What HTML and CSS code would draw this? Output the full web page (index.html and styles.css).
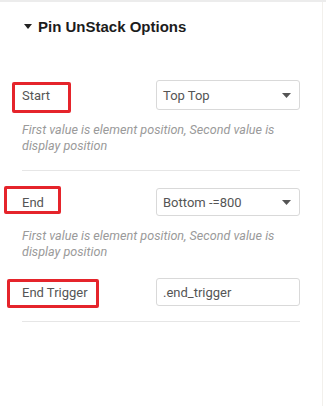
FILE: index.html
```html
<!DOCTYPE html>
<html>
<head>
<meta charset="utf-8">
<link rel="stylesheet" href="styles.css">
</head>
<body>
<div class="page">
  <div class="panel">
    <div class="header">
      <svg class="head-caret" width="8" height="5" viewBox="0 0 8 5"><path d="M0 0H8L4 5Z" fill="#222"/></svg>
      <span class="head-title">Pin UnStack Options</span>
    </div>

    <div class="row row-start">
      <span class="label">Start</span>
      <div class="select h30"><span>Top Top</span><svg width="9" height="5" viewBox="0 0 9 5"><path d="M0 0H9L4.5 5Z" fill="#555"/></svg></div>
      <div class="mark mark-start"></div>
    </div>
    <p class="desc">First value is element position, Second value is display position</p>
    <div class="sep sep1"></div>

    <div class="row row-end">
      <span class="label">End</span>
      <div class="select h28"><span>Bottom -=800</span><svg width="9" height="5" viewBox="0 0 9 5"><path d="M0 0H9L4.5 5Z" fill="#555"/></svg></div>
      <div class="mark mark-end"></div>
    </div>
    <p class="desc">First value is element position, Second value is display position</p>

    <div class="row row-trigger">
      <span class="label">End Trigger</span>
      <div class="input h28"><span>.end_trigger</span></div>
      <div class="mark mark-trigger"></div>
    </div>
    <div class="sep sep2"></div>
  </div>
  <div class="scroll"></div>
</div>
</body>
</html>
```

FILE: styles.css
```css
html, body {
  margin: 0;
  padding: 0;
  background: #fff;
}
body {
  font-family: Roboto, "Liberation Sans", Arial, sans-serif;
  width: 326px;
  height: 406px;
  overflow: hidden;
}
.page {
  display: flex;
  height: 406px;
  border-top: 2px solid #ececec;
  box-sizing: border-box;
}
.panel {
  width: 322px;
  flex: none;
}
.scroll {
  width: 1px;
  background: #f2f0ec;
}
.header {
  height: 48px;
  display: flex;
  align-items: center;
  padding-left: 24px;
}
.head-caret {
  margin-right: 6px;
  margin-top: 1px;
}
.head-title {
  font-family: "Liberation Sans", Arial, sans-serif;
  font-weight: bold;
  font-size: 15px;
  color: #1c1c1c;
}
.row {
  position: relative;
  display: flex;
  align-items: center;
}
.row-start { margin-top: 30px; }
.row-end { margin-top: 17px; }
.row-trigger { margin-top: 18px; }
.label {
  width: 156px;
  flex: none;
  padding-left: 22px;
  box-sizing: border-box;
  font-size: 13px;
  color: #555;
}
.select, .input {
  width: 144px;
  flex: none;
  box-sizing: border-box;
  border: 1px solid #d9d9d9;
  border-radius: 3px;
  display: flex;
  align-items: center;
  justify-content: space-between;
  padding: 0 8px 0 6px;
  font-size: 13px;
  color: #555;
}
.h30 { height: 30px; }
.h28 { height: 28px; }
.desc {
  margin: 12px 30px 0 22px;
  font-size: 12.6px;
  line-height: 16px;
  font-style: italic;
  color: #9a9a9a;
}
.sep {
  height: 1px;
  background: #e6e6e6;
  margin-left: 22px;
  width: 278px;
}
.sep1 { margin-top: 16px; }
.sep2 { margin-top: 15px; }
.mark {
  position: absolute;
  border: 3px solid #e5242b;
  border-radius: 2px;
  box-sizing: border-box;
}
.mark-start { left: 12px; top: 2px; width: 59px; height: 31px; }
.mark-end { left: 4px; top: -2px; width: 57px; height: 28px; }
.mark-trigger { left: 7px; top: 1px; width: 92px; height: 29px; }
```
